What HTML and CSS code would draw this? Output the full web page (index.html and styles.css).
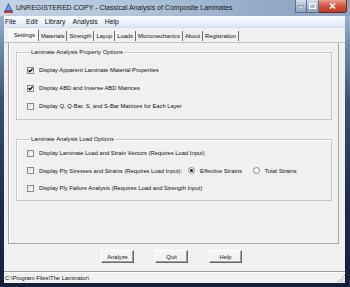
FILE: index.html
```html
<!DOCTYPE html>
<html lang="en">
<head>
  <meta charset="UTF-8" />
  <title>Classical Analysis of Composite Laminates</title>
  <link rel="stylesheet" href="styles.css">
</head>
<body>
  <div class="window">
    <div class="titlebar">
      <svg class="app-icon" width="9" height="10" viewBox="0 0 9 10">
        <polygon points="4.5,0 8.5,8 0.5,8" fill="#2f5fb8"/>
        <polygon points="4.5,2 7,7 2,7" fill="#6fa0e8"/>
        <rect x="0" y="8" width="9" height="2" fill="#c0392b"/>
      </svg>
      <span class="title">UNREGISTERED COPY - Classical Analysis of Composite Laminates</span>
      <div class="controls">
        <span class="ctl"><svg width="6" height="3" viewBox="0 0 6 3"><rect x="0" y="1" width="6" height="2" fill="#fff" stroke="#333" stroke-width="0.5"/></svg></span>
        <span class="ctl"><svg width="7" height="6" viewBox="0 0 7 6"><rect x="0.5" y="0.5" width="6" height="5" fill="none" stroke="#fff" stroke-width="1.2"/></svg></span>
        <span class="ctl close"><svg width="7" height="6" viewBox="0 0 7 6"><path d="M1 0.5 L6 5.5 M6 0.5 L1 5.5" stroke="#fff" stroke-width="1.6"/></svg></span>
      </div>
    </div>
    <div class="frame">
      <div class="client">
        <div class="menubar">
          <span class="menu-first">File</span>
          <span>Edit</span>
          <span>Library</span>
          <span>Analysis</span>
          <span>Help</span>
        </div>
        <div class="tabs">
          <span class="tab active">Settings</span>
          <span class="tab">Materials</span>
          <span class="tab">Strength</span>
          <span class="tab">Layup</span>
          <span class="tab">Loads</span>
          <span class="tab">Micromechanics</span>
          <span class="tab">About</span>
          <span class="tab">Registration</span>
        </div>
        <div class="page">
          <fieldset class="group group-props">
            <legend>Laminate Analysis Property Options</legend>
            <div class="row"><span class="check"><svg width="5" height="5" viewBox="0 0 5 5"><path d="M0.5 2.3 L2 3.8 L4.6 0.8" fill="none" stroke="#111" stroke-width="1.3"/></svg></span>Display Apparent Laminate Material Properties</div>
            <div class="row"><span class="check"><svg width="5" height="5" viewBox="0 0 5 5"><path d="M0.5 2.3 L2 3.8 L4.6 0.8" fill="none" stroke="#111" stroke-width="1.3"/></svg></span>Display ABD and Inverse ABD Matrices</div>
            <div class="row"><span class="check"></span>Display Q, Q-Bar, S, and S-Bar Matrices for Each Layer</div>
          </fieldset>
          <fieldset class="group group-loads">
            <legend>Laminate Analysis Load Options</legend>
            <div class="row"><span class="check"></span>Display Laminate Load and Strain Vectors (Requires Load Input)</div>
            <div class="row">
              <span class="check"></span>Display Ply Stresses and Strains (Requires Load Input):
              <span class="radio on"></span><span class="radio-label">Effective Strains</span>
              <span class="radio"></span><span class="radio-label">Total Strains</span>
            </div>
            <div class="row"><span class="check"></span>Display Ply Failure Analysis (Requires Load and Strength Input)</div>
          </fieldset>
        </div>
        <div class="buttons">
          <button class="btn">Analyze</button>
          <button class="btn">Quit</button>
          <button class="btn">Help</button>
        </div>
        <div class="statusbar">
          <span class="status-text">C:\Program Files\The Laminator\</span>
          <span class="grip"></span>
        </div>
      </div>
    </div>
  </div>
</body>
</html>
```

FILE: styles.css
```css
* {
  box-sizing: border-box;
}
body {
  margin: 0;
  font-family: "Liberation Sans", Arial, sans-serif;
  color: #111;
}
.window {
  width: 350px;
  height: 287px;
  display: flex;
  flex-direction: column;
  background: linear-gradient(180deg, #b8cade 0%, #7f98b6 12%, #3b5275 35%, #1d2c48 70%, #14203a 100%);
}
.titlebar {
  height: 16px;
  flex-shrink: 0;
  display: flex;
  align-items: flex-start;
  background: linear-gradient(90deg, #c3d3e4 0%, #aec3d9 40%, #93abc7 75%, #8ba4c2 100%);
}
.app-icon {
  margin: 3px 3px 0 4px;
}
.title {
  font-size: 7px;
  line-height: 15px;
  color: #1a1a1a;
  white-space: nowrap;
}
.controls {
  margin-left: auto;
  margin-right: 3px;
  display: flex;
}
.ctl {
  width: 12px;
  height: 13px;
  display: flex;
  align-items: center;
  justify-content: center;
  border: 1px solid #5d7089;
  border-top: none;
  background: linear-gradient(180deg, #d3dfeb 0%, #a9bcd3 50%, #8ea4c0 100%);
}
.ctl + .ctl {
  border-left: none;
}
.close {
  width: 28px;
  border-color: #6d2a20;
  background: linear-gradient(180deg, #e8a093 0%, #d0543f 50%, #c23a25 100%);
  border-bottom-right-radius: 3px;
}
.frame {
  flex: 1;
  display: flex;
  padding: 0 5px 4px 4px;
}
.client {
  flex: 1;
  display: flex;
  flex-direction: column;
  background: #f0f0f0;
}
.client > div {
  flex-shrink: 0;
}
.menubar {
  height: 12px;
  display: flex;
  align-items: center;
  gap: 7px;
  font-size: 6.8px;
  padding-left: 1px;
  background: linear-gradient(180deg, #fbfcfe 0%, #eef2f9 50%, #dce5f3 100%);
  border-bottom: 1px solid #d6deea;
}
.menu-first {
  margin-right: 3px;
}
.tabs {
  display: flex;
  height: 15px;
  align-items: center;
  padding: 2px 0 0 5px;
  font-size: 5.8px;
  border-bottom: 1px solid #c4c4c4;
}
.tab {
  padding: 0 2px;
  height: 10px;
  line-height: 10px;
  border-right: 1px solid #707070;
}
.tab.active {
  padding: 0 3px 0 4px;
  height: 12px;
  line-height: 11px;
  margin-top: -2px;
  background: #f5f5f5;
  border-left: 1px solid #fff;
  border-top: 1px solid #fff;
}
.page {
  height: 201px;
  margin: 0 6px 0 4px;
  border: 1px solid #a8a8a8;
  border-top: none;
  box-shadow: inset 1px 0 0 #fff;
  padding: 6px 6px 0 7px;
  display: flex;
  flex-direction: column;
}
.group {
  margin: 0;
  border: 1px solid #c8c8c8;
  box-shadow: inset 1px 1px 0 #fff;
  font-size: 5.8px;
}
.group legend {
  padding: 0 1px;
  margin-left: 3px;
  line-height: 7px;
}
.group-props {
  padding: 5px 4px 4px 10px;
}
.group-loads {
  margin-top: 15.5px;
  padding: 2px 4px 3px 10px;
}
.row {
  height: 18px;
  display: flex;
  align-items: center;
  white-space: nowrap;
}
.group-loads .row {
  height: 17.5px;
}
.check {
  width: 7px;
  height: 7px;
  margin-right: 5px;
  border: 1px solid #8a8a8a;
  background: linear-gradient(135deg, #dedede 0%, #fff 100%);
  display: flex;
  align-items: center;
  justify-content: center;
}
.radio {
  width: 7px;
  height: 7px;
  margin: 0 5px 0 6px;
  border: 1px solid #8a8a8a;
  border-radius: 50%;
  background: #fafafa;
  display: flex;
  align-items: center;
  justify-content: center;
}
.radio.on::after {
  content: "";
  width: 3px;
  height: 3px;
  border-radius: 50%;
  background: #111;
}
.radio-label {
  margin-right: 5px;
}
.buttons {
  display: flex;
  gap: 21px;
  padding: 6px 0 0 97px;
  height: 27px;
}
.btn {
  width: 33px;
  height: 13px;
  padding: 0;
  font-family: inherit;
  font-size: 5.8px;
  color: #111;
  background: #f2f2f2;
  border: 1px solid;
  border-color: #fff #6a6a6a #6a6a6a #fff;
  box-shadow: inset -1px -1px 0 #a0a0a0;
}
.statusbar {
  height: 12px;
  display: flex;
  align-items: center;
  border-top: 1px solid #a0a0a0;
  box-shadow: inset 0 1px 0 #fff;
  font-size: 5.8px;
  padding-left: 1px;
}
.grip {
  margin-left: auto;
  align-self: flex-end;
  width: 8px;
  height: 8px;
  background: linear-gradient(135deg, transparent 0%, transparent 45%, #b5b5b5 50%, transparent 55%, transparent 65%, #b5b5b5 70%, transparent 75%, transparent 85%, #b5b5b5 90%, transparent 95%);
}
```
